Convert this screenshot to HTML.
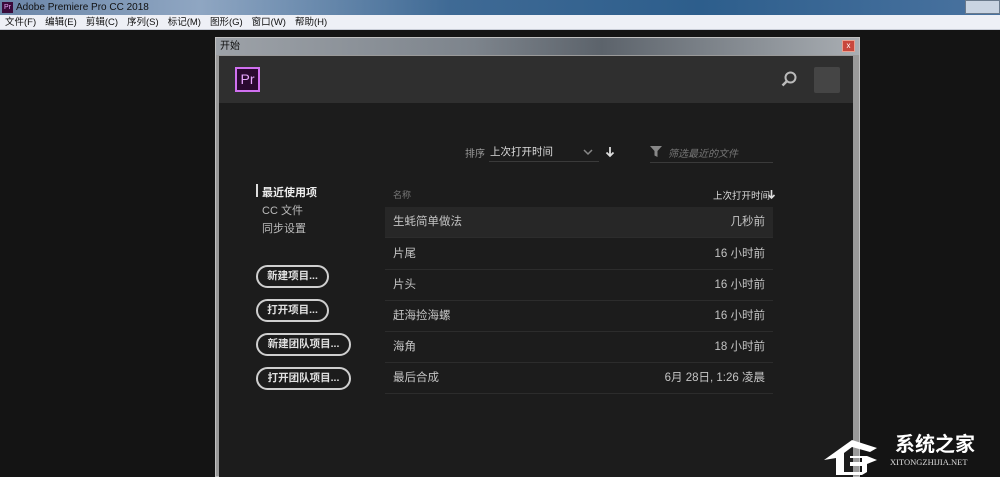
<!DOCTYPE html>
<html><head><meta charset="utf-8"><style>
*{margin:0;padding:0;box-sizing:border-box}
body{width:1000px;height:477px;overflow:hidden;background:#141414;font-family:"Liberation Sans","Noto Sans CJK SC",sans-serif;position:relative}
.abs{position:absolute}
.title{left:0;top:0;width:1000px;height:15px;background:linear-gradient(90deg,#6b86a8 0%,#8fa6c2 20%,#3f6a95 45%,#2d5e8c 70%,#4a73a0 100%);color:#111;font-size:10px;line-height:15px}
.menu{left:0;top:15px;width:1000px;height:15px;background:#eef0f6;border-bottom:1px solid #c8ccd6;font-size:9.5px;line-height:15px;color:#111}
.menu span{margin-left:5px;margin-right:4px}
.dlg{left:215px;top:37px;width:645px;height:440px;background:#9a9a9a;border:1px solid #c0c0c0}
.dtitle{left:216px;top:38px;width:643px;height:17px;background:linear-gradient(90deg,#9da2a8,#7d848c 40%,#5c636b 60%,#a9aeb3);font-size:10px;line-height:17px;color:#111;padding-left:4px}
.inner{left:219px;top:56px;width:634px;height:421px;background:#1c1c1c}
.hdr{left:219px;top:56px;width:634px;height:47px;background:#2f2f2f}
.row{left:385px;width:388px;height:31px;border-bottom:1px solid #2c2c2c;color:#c4c4c4;font-size:11.5px;line-height:31px;padding:0 8px}
.row b{float:right;font-weight:normal}
.btn{left:256px;height:23px;border:2px solid #cfcfcf;border-radius:12px;color:#e0e0e0;font-size:10.5px;font-weight:bold;line-height:19px;text-align:center}
</style></head><body>
<div class="abs title"><span style="display:inline-block;width:11px;height:11px;background:#3a0a3a;color:#e8a8f8;font-size:7px;line-height:11px;text-align:center;margin:2px 3px 0 2px;vertical-align:top">Pr</span>Adobe Premiere Pro CC 2018
<span class="abs" style="left:965px;top:0;width:35px;height:14px;background:#c9d4e2;border:1px solid #6a7a8c"></span></div>
<div class="abs menu"><span>文件(F)</span><span>编辑(E)</span><span>剪辑(C)</span><span>序列(S)</span><span>标记(M)</span><span>图形(G)</span><span>窗口(W)</span><span>帮助(H)</span></div>
<div class="abs dlg"></div>
<div class="abs dtitle">开始</div>
<div class="abs" style="left:842px;top:40px;width:13px;height:12px;background:#c8473c;border:1px solid #e8a090;color:#fff;font-size:8px;line-height:10px;text-align:center">x</div>
<div class="abs inner"></div>
<div class="abs hdr"></div>
<div class="abs" style="left:235px;top:67px;width:25px;height:25px;background:#2a0a30;border:2px solid #d070f0;color:#e8a8ff;font-size:14px;line-height:21px;text-align:center">Pr</div>
<svg class="abs" style="left:780px;top:70px" width="18" height="18"><circle cx="10.5" cy="7.5" r="5" fill="none" stroke="#bbb" stroke-width="2"/><path d="M7 11 L2.5 15.5" stroke="#bbb" stroke-width="2.5"/></svg>
<div class="abs" style="left:814px;top:67px;width:26px;height:26px;background:#454545;border-radius:2px"></div>
<div class="abs" style="left:465px;top:145px;font-size:10px;color:#999">排序</div>
<div class="abs" style="left:490px;top:144px;font-size:10.5px;color:#ddd">上次打开时间</div>
<div class="abs" style="left:489px;top:161px;width:110px;height:1px;background:#3a3a3a"></div>
<svg class="abs" style="left:582px;top:147px" width="12" height="10"><path d="M2 3 L6 7 L10 3" fill="none" stroke="#888" stroke-width="1.5"/></svg>
<svg class="abs" style="left:605px;top:146px" width="10" height="12"><path d="M5 1 V10 M1.5 6.5 L5 10 L8.5 6.5" fill="none" stroke="#ddd" stroke-width="1.8"/></svg>
<svg class="abs" style="left:650px;top:145px" width="12" height="13"><path d="M0 1 H12 L7.5 6 V12 L4.5 10.5 V6 Z" fill="#888"/></svg>
<div class="abs" style="left:668px;top:145px;font-size:10px;color:#777;font-style:italic">筛选最近的文件</div>
<div class="abs" style="left:650px;top:162px;width:123px;height:1px;background:#3a3a3a"></div>
<div class="abs" style="left:256px;top:184px;width:2px;height:13px;background:#ddd"></div>
<div class="abs" style="left:262px;top:184px;font-size:11px;font-weight:bold;color:#eee">最近使用项</div>
<div class="abs" style="left:262px;top:202px;font-size:11px;color:#bbb">CC 文件</div>
<div class="abs" style="left:262px;top:220px;font-size:11px;color:#bbb">同步设置</div>
<div class="abs" style="left:393px;top:188px;font-size:9px;color:#777">名称</div>
<div class="abs" style="left:713px;top:188px;font-size:9.5px;color:#ddd">上次打开时间</div>
<svg class="abs" style="left:767px;top:189px" width="9" height="11"><path d="M4.5 1 V9 M1.5 6 L4.5 9 L7.5 6" fill="none" stroke="#ddd" stroke-width="1.6"/></svg>
<div class="abs row" style="top:207px;background:#272727">生蚝简单做法<b>几秒前</b></div>
<div class="abs row" style="top:239px">片尾<b>16 小时前</b></div>
<div class="abs row" style="top:270px">片头<b>16 小时前</b></div>
<div class="abs row" style="top:301px">赶海捡海螺<b>16 小时前</b></div>
<div class="abs row" style="top:332px">海角<b>18 小时前</b></div>
<div class="abs row" style="top:363px">最后合成<b>6月 28日, 1:26 凌晨</b></div>
<div class="abs btn" style="top:265px;width:73px">新建项目...</div>
<div class="abs btn" style="top:299px;width:73px">打开项目...</div>
<div class="abs btn" style="top:333px;width:95px">新建团队项目...</div>
<div class="abs btn" style="top:367px;width:95px">打开团队项目...</div>
<div class="abs" style="left:895px;top:428px;font-size:20px;font-weight:bold;color:#fff">系统之家</div>
<div class="abs" style="left:890px;top:457px;font-size:8.5px;color:#ddd;font-family:'Liberation Serif',serif">XITONGZHIJIA.NET</div>
<svg class="abs" style="left:822px;top:420px" width="75" height="55"><path d="M2 40 L30 20 L55 28 L48 32 L30 27 L22 33 L22 52 L40 52 L40 46 L28 46 L28 42 L40 42 L40 38 L28 38 L28 36 L45 36 L55 40 L45 44 L45 52 L40 55 L14 55 L14 38 Z" fill="#fff"/></svg>
</body></html>
